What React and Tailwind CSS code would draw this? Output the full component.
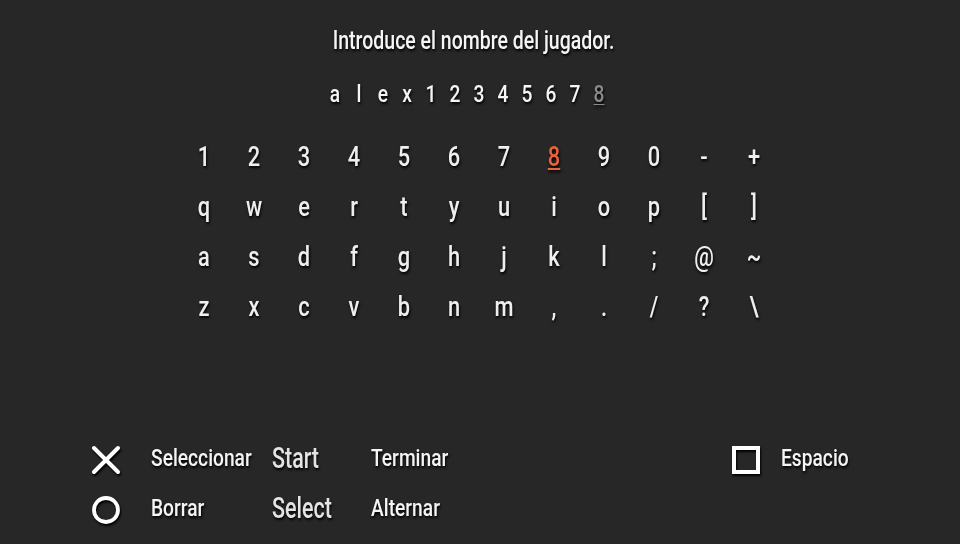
const font = { fontFamily: "Roboto, sans-serif" };

const typed = ["a", "l", "e", "x", "1", "2", "3", "4", "5", "6", "7", "8"];

const keys = [
  ["1", "2", "3", "4", "5", "6", "7", "8", "9", "0", "-", "+"],
  ["q", "w", "e", "r", "t", "y", "u", "i", "o", "p", "[", "]"],
  ["a", "s", "d", "f", "g", "h", "j", "k", "l", ";", "@", "~"],
  ["z", "x", "c", "v", "b", "n", "m", ",", ".", "/", "?", "\\"],
];

const shadow = "[text-shadow:1px_2px_3px_#000]";

function Label({ children }) {
  return (
    <span className="-mt-[2px] inline-block origin-left scale-x-[0.8] whitespace-nowrap text-[24px] font-medium leading-[30px] text-[#f5f5f5] [text-shadow:1px_2px_3px_#000]">
      {children}
    </span>
  );
}

function BigLabel({ children }) {
  return (
    <span className="-mt-[3px] inline-block origin-left scale-x-[0.74] whitespace-nowrap text-[29px] font-medium leading-[30px] text-[#e4e4e4] [text-shadow:1px_2px_3px_#000]">
      {children}
    </span>
  );
}

function Glyph({ children }) {
  return (
    <svg width="36" height="36" viewBox="0 0 36 36" className="mt-[2px] drop-shadow-[1px_2px_1px_#000]">
      {children}
    </svg>
  );
}

export default function App() {
  return (
    <div style={font} className="flex h-[544px] w-[960px] flex-col overflow-hidden bg-[#272727]">
      <div className="flex h-[80px] items-center justify-center pr-[13px] pt-[1px]">
        <span className="inline-block scale-x-[0.78] whitespace-nowrap text-[25px] font-medium leading-[30px] text-[#f5f5f5] [text-shadow:1px_2px_3px_#000]">
          Introduce el nombre del jugador.
        </span>
      </div>

      <div className="flex justify-center pr-[26px]">
        {typed.map((c, i) => (
          <span
            key={i}
            className={`block h-[30px] w-[24px] scale-x-[0.8] text-center text-[24px] font-medium leading-[29px] ${shadow} ${
              i === 11 ? "text-[#8a8a8a] underline decoration-1 underline-offset-2" : "text-[#f5f5f5]"
            }`}
          >
            {c}
          </span>
        ))}
      </div>

      <div className="ml-[179px] mt-[22px] grid w-[600px] grid-cols-12 grid-rows-[50px_50px_50px_50px]">
        {keys.flat().map((c, i) => (
          <span
            key={i}
            className={`flex scale-x-[0.78] items-center justify-center text-[28px] font-medium ${shadow} ${
              c === "8" ? "text-[#e8623a] underline decoration-2 underline-offset-2" : "text-[#eeeeee]"
            }`}
          >
            {c}
          </span>
        ))}
      </div>

      <div className="ml-[88px] mt-[102px] flex">
        <div className="grid grid-cols-[63px_121px_99px_auto] grid-rows-[50px_50px] items-center">
          <Glyph>
            <path d="M6 6 L30 30 M30 6 L6 30" stroke="#fff" strokeWidth="4" strokeLinecap="round" fill="none" />
          </Glyph>
          <Label>Seleccionar</Label>
          <BigLabel>Start</BigLabel>
          <Label>Terminar</Label>
          <Glyph>
            <circle cx="18" cy="18" r="12" stroke="#fff" strokeWidth="3.8" fill="none" />
          </Glyph>
          <Label>Borrar</Label>
          <BigLabel>Select</BigLabel>
          <Label>Alternar</Label>
        </div>
        <div className="ml-[260px] flex h-[50px] items-center gap-[17px]">
          <Glyph>
            <rect x="6" y="6" width="24" height="24" stroke="#fff" strokeWidth="4" fill="none" />
          </Glyph>
          <Label>Espacio</Label>
        </div>
      </div>
    </div>
  );
}
